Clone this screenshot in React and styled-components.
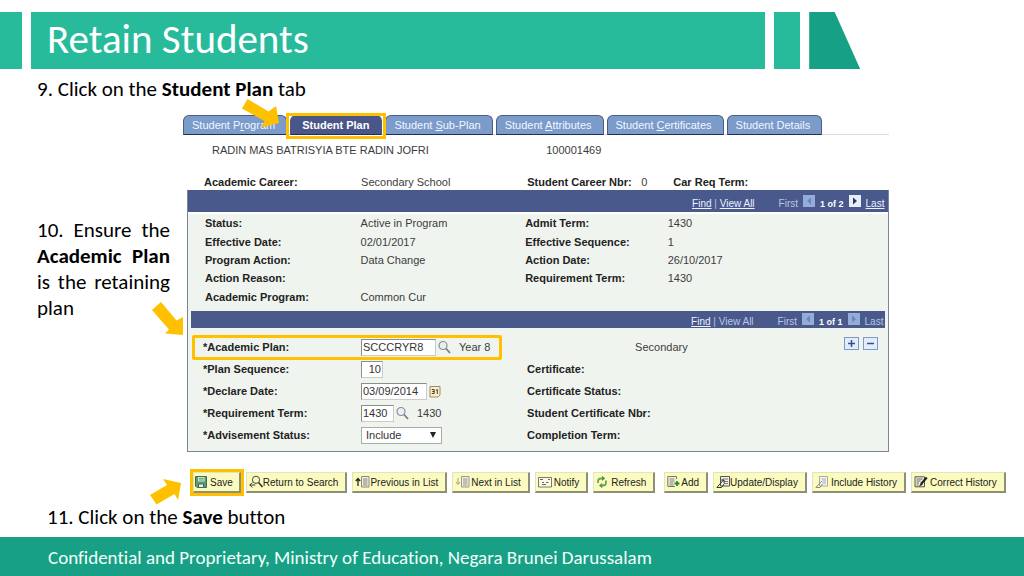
import React, { useState } from "react";
import styled, { createGlobalStyle, css } from "styled-components";

const GlobalStyle = createGlobalStyle`
  * {
    box-sizing: border-box;
  }
  body {
    margin: 0;
    background: #fff;
  }
`;

const slideFont = `Carlito, Calibri, Lato, sans-serif`;
const formFont = `"Liberation Sans", Arial, sans-serif`;

const Slide = styled.div`
  display: flex;
  flex-direction: column;
  min-height: 100vh;
  overflow: hidden;
  font-family: ${slideFont};
  font-variant-ligatures: none;
  color: #000;
`;

const Banner = styled.header`
  display: flex;
  gap: 9px;
  height: 69px;
  padding: 12px 16% 0 0;
`;

const Block = styled.div`
  width: ${(props) => props.$width}px;
  background: #28bb9b;
`;

const Slant = styled.div`
  width: 51px;
  background: #16a085;
  clip-path: polygon(0 0, 50% 0, 100% 100%, 0 100%);
`;

const Title = styled.h1`
  flex: 1;
  margin: 0;
  padding-left: 16px;
  background: #28bb9b;
  color: #fff;
  font-size: 41px;
  font-weight: 300;
  line-height: 55px;
  white-space: nowrap;
`;

const Step = styled.p`
  position: relative;
  margin: 0;
  font-size: 21px;
  line-height: 26px;
`;

const TopStep = styled(Step)`
  padding: 7px 0 13px 37px;
`;

const BottomStep = styled(Step)`
  padding: 11px 0 7px 47px;
`;

const SideStep = styled(Step)`
  align-self: start;
  margin: 102px 13px 0 37px;
  text-align: justify;
`;

const Columns = styled.main`
  display: grid;
  grid-template-columns: 183px minmax(0, 1fr);
`;

const Work = styled.div`
  font-family: ${formFont};
  font-size: 11px;
  line-height: 14px;
  color: #3c3c3c;
`;

const Tabs = styled.nav`
  display: flex;
  gap: 3px;
  margin-right: 16%;
  border-bottom: 1px solid #dcdcdc;
`;

const Tab = styled.a`
  position: relative;
  height: 20px;
  margin-bottom: -1px;
  padding: 0 11px 0 8px;
  border: 1px solid #4a5f80;
  border-bottom-color: #1f3050;
  border-radius: 6px 6px 0 0;
  background: #7b9bca;
  color: #f2f7ff;
  line-height: 18px;
  text-decoration: none;
  white-space: nowrap;
  ${(props) =>
    props.$active &&
    css`
      z-index: 1;
      padding: 0 12px 0 11px;
      background: #4a5688;
      color: #fff;
      font-weight: bold;
      &::after {
        content: "";
        position: absolute;
        inset: -3px -5px -5px;
        border: 3px solid #ffc000;
      }
    `}
`;

const Arrow = styled.svg`
  position: absolute;
  z-index: 2;
  fill: #ffc000;
  pointer-events: none;
`;

const TabArrow = styled(Arrow)`
  right: 101px;
  top: -17px;
`;

const PlanArrow = styled(Arrow)`
  right: -13px;
  bottom: -15px;
`;

const SaveArrow = styled(Arrow)`
  right: 58px;
  top: 6px;
`;

const Person = styled.div`
  display: grid;
  grid-template-columns: 334fr 343fr;
  margin-right: 16%;
  padding: 8px 0 18px 29px;
`;

const Career = styled.div`
  display: grid;
  grid-template-columns: 157fr 166fr 114fr 32fr 216fr;
  margin-right: 16%;
  padding-left: 21px;
  white-space: nowrap;
`;

const Label = styled.label`
  color: #222;
  font-weight: bold;
  white-space: nowrap;
`;

const Panel = styled.section`
  margin: 1px 16% 0 4px;
  border: 1px solid #7c8496;
  border-top: 0;
  background: #f0f4ef;
`;

const Bar = styled.div`
  display: flex;
  justify-content: flex-end;
  align-items: center;
  gap: 5px;
  height: ${(props) => (props.$inner ? 17 : 22)}px;
  margin: ${(props) => (props.$inner ? "0 3px" : "0")};
  padding: ${(props) => (props.$inner ? "5px 2px 0 0" : "6px 4px 0 0")};
  background: #49598b;
  color: #b9c6e2;
  font-size: 10px;
  line-height: 12px;
  strong {
    color: #fff;
    font-size: 9px;
  }
`;

const BarLinks = styled.span`
  margin-right: 19px;
  white-space: nowrap;
`;

const BarLink = styled.a`
  color: #eef2ff;
`;

const Stepper = styled.button`
  display: flex;
  width: 12px;
  height: 12px;
  margin-bottom: 6px;
  padding: 0;
  border: 0;
  background: ${(props) => (props.disabled ? "#94add8" : "#e6eefa")};
  svg {
    width: 12px;
    height: 12px;
    fill: ${(props) => (props.disabled ? "#6c86ba" : "#26365f")};
  }
`;

const Facts = styled.div`
  display: grid;
  grid-template-columns: 155fr 164fr 142fr 220fr;
  grid-auto-rows: 1fr;
  align-items: center;
  height: 99px;
  padding: 0 0 5px 17px;
  border-top: 2px solid #fff;
`;

const Fields = styled.div`
  display: grid;
  grid-template-columns: 322fr 359fr;
  grid-auto-rows: 22px;
  align-items: center;
  padding: 8px 0 5px 15px;
`;

const Field = styled.div`
  position: relative;
  display: grid;
  grid-template-columns: 158px 1fr;
  align-items: center;
  ${(props) =>
    props.$marked &&
    css`
      &::after {
        content: "";
        position: absolute;
        inset: -4px 25px -4px -11px;
        border: 3px solid #ffc000;
        border-radius: 2px;
        pointer-events: none;
      }
    `}
`;

const Control = styled.div`
  position: relative;
  display: flex;
  align-items: center;
  gap: 2px;
`;

const Input = styled.input`
  width: ${(props) => props.$width}px;
  height: 17px;
  padding: 0 1px;
  border: 1px solid #c9cdc9;
  border-top-color: #8b8f8b;
  border-left-color: #8b8f8b;
  background: #fff;
  color: #333;
  font: 11px ${formFont};
  text-align: ${(props) => props.$align || "left"};
`;

const Select = styled.select`
  width: 81px;
  height: 17px;
  padding: 0 4px;
  border: 1px solid #a9ada9;
  border-radius: 0;
  background: #fff;
  color: #333;
  font: 11px ${formFont};
  appearance: none;
`;

const Caret = styled.svg`
  position: absolute;
  left: 68px;
  top: 5px;
  pointer-events: none;
`;

const IconButton = styled.button`
  display: flex;
  padding: 0;
  border: 0;
  background: none;
`;

const Note = styled.span`
  margin-left: 6px;
`;

const PlanType = styled.div`
  display: flex;
  justify-content: space-between;
  align-items: center;
  padding: 0 10px 0 108px;
`;

const RowButtons = styled.span`
  display: flex;
  gap: 4px;
  margin-bottom: 8px;
`;

const RowButton = styled.button`
  display: flex;
  padding: 0;
  width: 15px;
  height: 13px;
  border: 1px solid #7e98c8;
  background: #e3ecfa;
`;

const Toolbar = styled.div`
  display: flex;
  gap: 5px;
  margin: 20px 0 0 10px;
`;

const Tool = styled.button`
  position: relative;
  display: flex;
  align-items: center;
  gap: ${(props) => props.$gap}px;
  height: 21px;
  margin-left: ${(props) => (props.$apart ? 4 : 0)}px;
  padding: 0 7px 0 2px;
  border: 1px solid #e2e4bd;
  border-right: 2px solid #8d8f78;
  border-bottom: 2px solid #8d8f78;
  background: #fbfbc0;
  color: #222;
  font: 10px ${formFont};
  white-space: nowrap;
  ${(props) =>
    props.$marked &&
    css`
      padding: 0 6px 0 1px;
      outline: 3px solid #ffc000;
    `}
`;

const Footer = styled.footer`
  flex: 1;
  padding: 9px 48px 6px;
  background: #17a085;
  color: #f2fffb;
  font-size: 19px;
  line-height: 24px;
`;

const Svg = ({ w = 14, children }) => (
  <svg width={w} height="14" viewBox={`0 0 ${w} 14`} fill="none" stroke="#444">
    {children}
  </svg>
);

const icons = {
  save: (
    <Svg w={12}>
      <path d="M.5 1.500h11v11H2l-1.500-1.500z" fill="#5f9a72" stroke="#3c6e50" />
      <path d="M3 2h6.500v4.500H3z" fill="#c9e4cd" stroke="none" />
      <path d="M3.500 9h5v3.500h-5z" fill="#e9efe9" stroke="#3c6e50" />
      <path d="M4 3.500h4.500M4 5h4.500" stroke="#4f8a63" strokeWidth=".7" />
    </Svg>
  ),
  search: (
    <Svg w={14}>
      <circle cx="7" cy="4.800" r="3.600" stroke="#444" />
      <path d="M9.500 7.500l4 4.500" stroke="#333" strokeWidth="1.600" />
      <path d="M.8 10h5.500M3.300 7.500L.8 10l2.500 2.500" stroke="#333" />
    </Svg>
  ),
  previous: (
    <Svg w={15}>
      <path d="M3 11V4M.8 6L3 3.500 5.200 6" stroke="#222" strokeWidth="1.300" />
      <path d="M6.500 1.500h7.500v10.500H6.500z" fill="#f3f0dd" stroke="#888" />
      <path d="M8 4h4.500M8 6h4.500M8 8h4.500M8 10h4.500" stroke="#666" strokeWidth=".8" />
    </Svg>
  ),
  next: (
    <Svg w={15}>
      <path d="M3 3v6M1 7l2 2.500L5 7" stroke="#a2a282" />
      <path d="M6.500 1.500h7.500v10.500H6.500z" fill="#f3f0dd" stroke="#999" />
      <path d="M8 4h4.500M8 6h4.500M8 8h4.500M8 10h4.500" stroke="#777" strokeWidth=".8" />
    </Svg>
  ),
  notify: (
    <Svg w={14}>
      <path d="M.5 2.500h13v9.500H.5z" fill="#fbfbe4" stroke="#777" />
      <path d="M2 4.500h3M10 4.500h2M4 7.500h2M8 7.500h2.500M4 9.500h4" stroke="#666" />
    </Svg>
  ),
  refresh: (
    <Svg w={12}>
      <path d="M2 8V6.500Q2 3.500 5 3.500h2" stroke="#6da55d" strokeWidth="1.800" />
      <path d="M6 .8L9.200 3.500 6 6z" fill="#4d9442" stroke="none" />
      <path d="M10 5.500V7.500Q10 10.500 7 10.500H5.500" stroke="#6da55d" strokeWidth="1.800" />
      <path d="M6.200 8L3 10.500l3.200 2.700z" fill="#4d9442" stroke="none" />
    </Svg>
  ),
  add: (
    <Svg w={13}>
      <path d="M9.500 4V1.500H.8v10H8" fill="#f3f3cf" stroke="#777" />
      <path d="M2.500 4h5M2.500 6h5M2.500 8h4M2.500 10h4" stroke="#666" strokeWidth=".8" />
      <path d="M10 6v5M7.500 8.500h5" stroke="#2c8a34" strokeWidth="1.800" />
    </Svg>
  ),
  update: (
    <Svg w={14}>
      <path d="M4.500 1.500h9v9.500h-9z" fill="#f3f3dd" stroke="#555" />
      <path d="M6.500 4h5.500M8 6.500h4M8 8.500h4" stroke="#777" />
      <path d="M.8 12.500L7.500 5M1 12.500h4.500L8 9M5 5h3v3" stroke="#333" />
    </Svg>
  ),
  include: (
    <Svg w={13}>
      <path d="M4.500 1.500h8v9.500h-8z" fill="#f6f6ea" stroke="#aaa" />
      <path d="M6.500 4h4.500M7.500 6h3.500M7.500 8h3.500" stroke="#aaa" />
      <path d="M.8 12.500L7 6M1 12.500h4L7.500 9" stroke="#888" />
    </Svg>
  ),
  correct: (
    <Svg w={14}>
      <path d="M1 1.800h9.500v10H1z" fill="#f3f3dd" stroke="#555" />
      <path d="M2.500 4h6M2.500 6h4M2.500 8h2.500M2.500 10h2" stroke="#555" strokeWidth=".9" />
      <path d="M12.800 2.500L7 9" stroke="#222" strokeWidth="2.200" />
      <path d="M7.500 8L5.500 11 8.500 9.500" fill="#222" stroke="#222" strokeWidth=".6" />
    </Svg>
  ),
};

const Lens = () => (
  <svg width="13" height="14" viewBox="0 0 13 14" fill="none">
    <circle cx="5" cy="5.500" r="4" fill="#e9eff5" stroke="#8b8f94" strokeWidth="1.200" />
    <path d="M8 8.500l4 4.500" stroke="#7b7b7b" strokeWidth="1.800" />
  </svg>
);

const Calendar = () => (
  <svg width="12" height="13" viewBox="0 0 12 13" fill="none">
    <path d="M1 1.500h10v8.500l-2 2H1z" fill="#f8efcf" stroke="#a08a5c" />
    <path d="M2.800 4.500h2.400v4H2.800M3.300 6.500h1.900M7 5.300l1.300-.8v4.500" stroke="#4d3d22" />
  </svg>
);

const LeftIcon = () => (
  <svg viewBox="0 0 12 12">
    <path d="M8 2.500v7L4 6z" />
  </svg>
);

const RightIcon = () => (
  <svg viewBox="0 0 12 12">
    <path d="M4 2.500v7L8 6z" />
  </svg>
);

const facts = [
  ["Status:", "Active in Program", "Admit Term:", "1430"],
  ["Effective Date:", "02/01/2017", "Effective Sequence:", "1"],
  ["Program Action:", "Data Change", "Action Date:", "26/10/2017"],
  ["Action Reason:", "", "Requirement Term:", "1430"],
  ["Academic Program:", "Common Cur", "", ""],
];

const tools = [
  { icon: "search", text: "Return to Search", gap: 0 },
  { icon: "previous", text: "Previous in List", gap: 0 },
  { icon: "next", text: "Next in List", gap: 1 },
  { icon: "notify", text: "Notify", gap: 2 },
  { icon: "refresh", text: "Refresh", gap: 3 },
  { icon: "add", text: "Add", gap: 1, apart: true },
  { icon: "update", text: "Update/Display", gap: 0 },
  { icon: "include", text: "Include History", gap: 3 },
  { icon: "correct", text: "Correct History", gap: 2 },
];

const BarNav = ({ inner, count }) => (
  <Bar $inner={inner}>
    <BarLinks>
      <BarLink href="#find">Find</BarLink> |{" "}
      {inner ? "View All" : <BarLink href="#all">View All</BarLink>}
    </BarLinks>
    <span>First</span>
    <Stepper disabled aria-label="Previous row">
      <LeftIcon />
    </Stepper>
    <strong>{count}</strong>
    <Stepper disabled={inner} aria-label="Next row">
      <RightIcon />
    </Stepper>
    {inner ? <span>Last</span> : <BarLink href="#last">Last</BarLink>}
  </Bar>
);

const App = () => {
  const [values, setValues] = useState({
    plan: "SCCCRYR8",
    sequence: "10",
    declared: "03/09/2014",
    term: "1430",
    advisement: "Include",
  });

  const bind = (name) => ({
    id: name,
    value: values[name],
    onChange: (e) => setValues({ ...values, [name]: e.target.value }),
  });

  return (
    <Slide>
      <GlobalStyle />
      <Banner>
        <Block $width={22} />
        <Title>Retain Students</Title>
        <Block $width={26} />
        <Slant />
      </Banner>

      <TopStep>
        9. Click on the <b>Student Plan</b> tab
      </TopStep>

      <Columns>
        <SideStep as="div">
          10. Ensure the <b>Academic Plan</b> is the retaining plan
          <PlanArrow width="32" height="34" viewBox="0 0 32 34">
            <path d="M1 8L10 0l15.500 18.500L32 15v18l-18-1.500 4-4z" />
          </PlanArrow>
        </SideStep>

        <Work>
          <Tabs>
            <Tab href="#program">
              Student P<u>r</u>ogram
            </Tab>
            <Tab href="#plan" $active>
              Student Plan
              <TabArrow width="38" height="29" viewBox="0 0 38 29">
                <path d="M0 9.500L5.500 0 26.500 12.500 34 7l3 17-18 4.500L22.500 22z" />
              </TabArrow>
            </Tab>
            <Tab href="#subplan">
              Student <u>S</u>ub-Plan
            </Tab>
            <Tab href="#attributes">
              Student <u>A</u>ttributes
            </Tab>
            <Tab href="#certificates">
              Student <u>C</u>ertificates
            </Tab>
            <Tab href="#details">Student Details</Tab>
          </Tabs>

          <Person>
            <span>RADIN MAS BATRISYIA BTE RADIN JOFRI</span>
            <span>100001469</span>
          </Person>

          <Career>
            <Label as="span">Academic Career:</Label>
            <span>Secondary School</span>
            <Label as="span">Student Career Nbr:</Label>
            <span>0</span>
            <Label as="span">Car Req Term:</Label>
          </Career>

          <Panel>
            <BarNav count="1 of 2" />
            <Facts>
              {facts.map(([label, value, label2, value2]) => (
                <React.Fragment key={label}>
                  <Label as="span">{label}</Label>
                  <span>{value}</span>
                  <Label as="span">{label2}</Label>
                  <span>{value2}</span>
                </React.Fragment>
              ))}
            </Facts>

            <BarNav inner count="1 of 1" />
            <Fields>
              <Field $marked>
                <Label htmlFor="plan">*Academic Plan:</Label>
                <Control>
                  <Input $width={75} {...bind("plan")} />
                  <IconButton aria-label="Look up academic plan">
                    <Lens />
                  </IconButton>
                  <Note>Year 8</Note>
                </Control>
              </Field>
              <PlanType>
                <span>Secondary</span>
                <RowButtons>
                  <RowButton aria-label="Add row">
                    <svg width="13" height="11" viewBox="0 0 13 11">
                      <path d="M6.500 2v7M3 5.500h7" stroke="#34508c" strokeWidth="1.500" />
                    </svg>
                  </RowButton>
                  <RowButton aria-label="Delete row">
                    <svg width="13" height="11" viewBox="0 0 13 11">
                      <path d="M3 5.500h7" stroke="#34508c" strokeWidth="1.500" />
                    </svg>
                  </RowButton>
                </RowButtons>
              </PlanType>

              <Field>
                <Label htmlFor="sequence">*Plan Sequence:</Label>
                <Control>
                  <Input $width={22} $align="right" {...bind("sequence")} />
                </Control>
              </Field>
              <Label as="span">Certificate:</Label>

              <Field>
                <Label htmlFor="declared">*Declare Date:</Label>
                <Control>
                  <Input $width={66} {...bind("declared")} />
                  <IconButton aria-label="Choose declare date">
                    <Calendar />
                  </IconButton>
                </Control>
              </Field>
              <Label as="span">Certificate Status:</Label>

              <Field>
                <Label htmlFor="term">*Requirement Term:</Label>
                <Control>
                  <Input $width={33} {...bind("term")} />
                  <IconButton aria-label="Look up requirement term">
                    <Lens />
                  </IconButton>
                  <Note>1430</Note>
                </Control>
              </Field>
              <Label as="span">Student Certificate Nbr:</Label>

              <Field>
                <Label htmlFor="advisement">*Advisement Status:</Label>
                <Control>
                  <Select {...bind("advisement")}>
                    <option>Include</option>
                    <option>Exclude</option>
                  </Select>
                  <Caret width="8" height="7" viewBox="0 0 8 7">
                    <path d="M1 0h6L4 6z" fill="#222" />
                  </Caret>
                </Control>
              </Field>
              <Label as="span">Completion Term:</Label>
            </Fields>
          </Panel>

          <Toolbar>
            <Tool $gap={3} $marked>
              {icons.save}
              Save
              <SaveArrow width="31" height="26" viewBox="0 0 31 26">
                <path d="M0 16l6.500 9.500L24.500 15l3.500 6L31 4 13 0l4 6z" />
              </SaveArrow>
            </Tool>
            {tools.map((tool) => (
              <Tool key={tool.text} $gap={tool.gap} $apart={tool.apart}>
                {icons[tool.icon]}
                {tool.text}
              </Tool>
            ))}
          </Toolbar>
        </Work>
      </Columns>

      <BottomStep>
        11. Click on the <b>Save</b> button
      </BottomStep>

      <Footer>
        Confidential and Proprietary, Ministry of Education, Negara Brunei
        Darussalam
      </Footer>
    </Slide>
  );
};

export default App;
